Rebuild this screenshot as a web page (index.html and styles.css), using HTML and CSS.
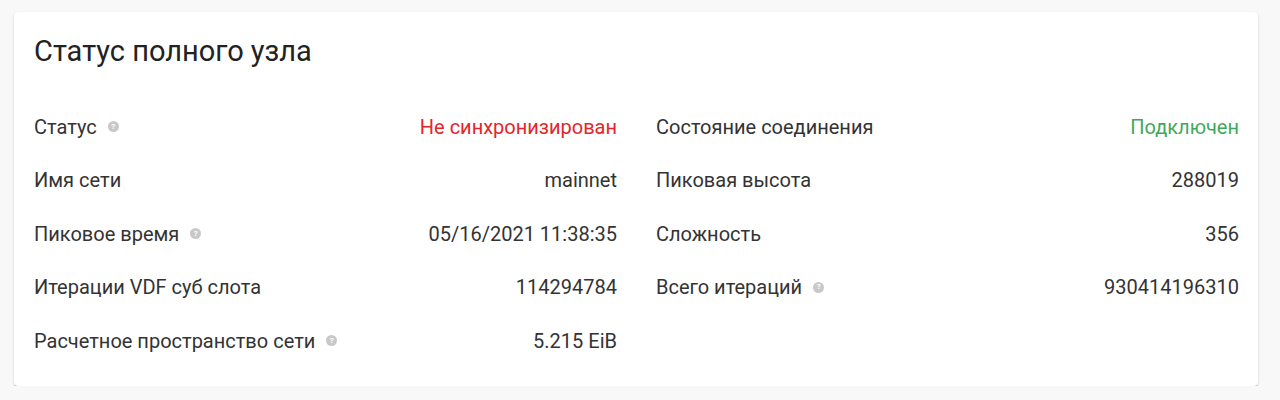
FILE: index.html
```html
<!DOCTYPE html>
<html lang="ru">
<head>
  <meta charset="UTF-8" />
  <meta name="viewport" content="width=device-width, initial-scale=1.0"/>
  <title>Статус полного узла</title>
  <link rel="stylesheet" href="styles.css">
</head>
<body>

  <div class="card">
    <h2 class="card-title">Статус полного узла</h2>

    <div class="grid">
      <div class="col">
        <div class="row">
          <span class="label">Статус <span class="help">?</span></span>
          <span class="value red">Не синхронизирован</span>
        </div>
        <div class="row">
          <span class="label">Имя сети</span>
          <span class="value">mainnet</span>
        </div>
        <div class="row">
          <span class="label">Пиковое время <span class="help">?</span></span>
          <span class="value">05/16/2021 11:38:35</span>
        </div>
        <div class="row">
          <span class="label">Итерации VDF суб слота</span>
          <span class="value">114294784</span>
        </div>
        <div class="row">
          <span class="label">Расчетное пространство сети <span class="help">?</span></span>
          <span class="value">5.215 EiB</span>
        </div>
      </div>

      <div class="col">
        <div class="row">
          <span class="label">Состояние соединения</span>
          <span class="value green">Подключен</span>
        </div>
        <div class="row">
          <span class="label">Пиковая высота</span>
          <span class="value">288019</span>
        </div>
        <div class="row">
          <span class="label">Сложность</span>
          <span class="value">356</span>
        </div>
        <div class="row">
          <span class="label">Всего итераций <span class="help">?</span></span>
          <span class="value">930414196310</span>
        </div>
      </div>
    </div>
  </div>

</body>
</html>
```

FILE: styles.css
```css
body {
  margin: 0;
  padding: 12px 22px 0 14px;
  background-color: #f8f8f8;
  font-family: Roboto, "Noto Sans", sans-serif;
  color: #333;
}
.card {
  background-color: #fff;
  border-radius: 4px;
  box-shadow: 0 2px 1px -1px rgba(0,0,0,0.2), 0 1px 1px 0 rgba(0,0,0,0.14), 0 1px 3px 0 rgba(0,0,0,0.12);
  padding: 20px 19px 20px 20px;
  height: 334px;
}
.card-title {
  margin: 0;
  font-size: 29px;
  font-weight: 400;
  line-height: 38px;
  color: #222;
}
.grid {
  display: grid;
  grid-template-columns: 1fr 1fr;
  column-gap: 39px;
  margin-top: 30px;
}
.row {
  display: flex;
  justify-content: space-between;
  align-items: center;
  height: 53.5px;
  font-size: 20px;
}
.label {
  display: flex;
  align-items: center;
  gap: 11px;
}
.help {
  display: inline-flex;
  align-items: center;
  justify-content: center;
  width: 11px;
  height: 11px;
  border-radius: 50%;
  background-color: #c8c8c8;
  color: #fff;
  font-size: 8px;
  font-weight: bold;
  line-height: 1;
}
.red {
  color: #e2262b;
}
.green {
  color: #3fa95a;
}
```
